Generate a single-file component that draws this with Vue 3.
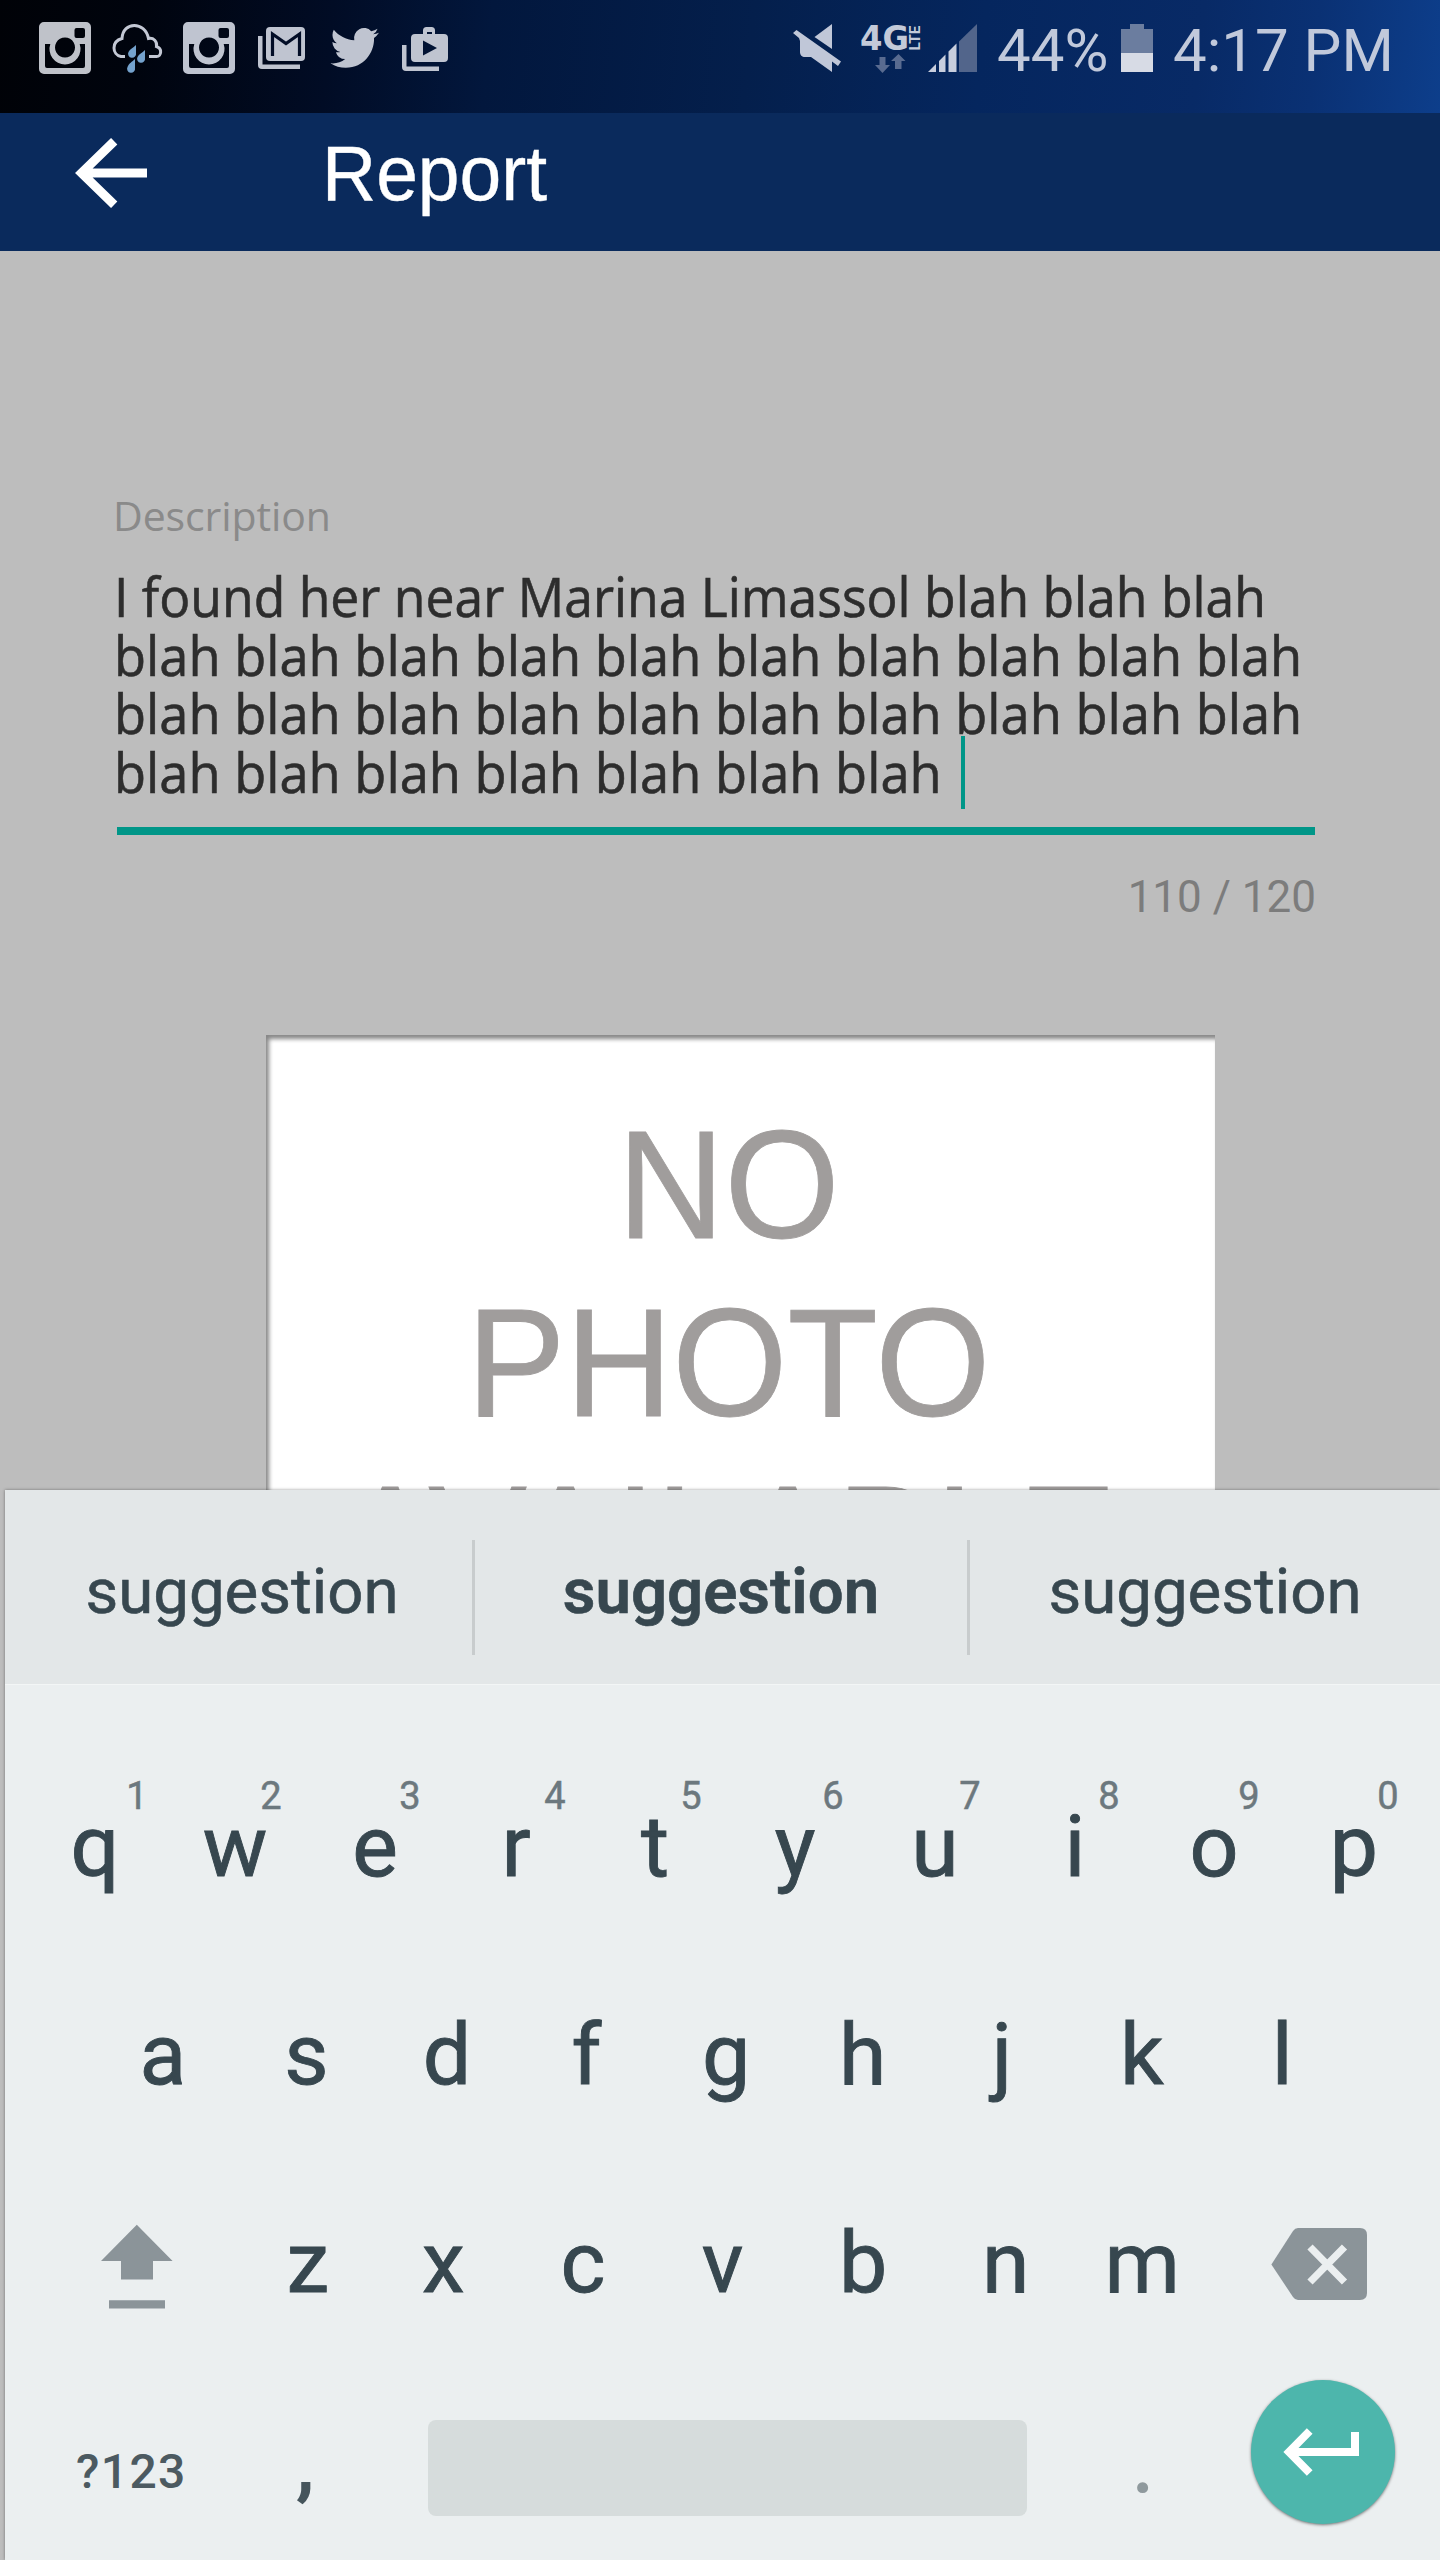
<script setup>
const lines = [
  { text: 'I found her near Marina Limassol blah blah blah', fit: 0.939 },
  { text: 'blah blah blah blah blah blah blah blah blah blah', fit: 0.953 },
  { text: 'blah blah blah blah blah blah blah blah blah blah', fit: 0.953 },
  { text: 'blah blah blah blah blah blah blah', fit: 0.953 },
]
const suggestions = ['suggestion', 'suggestion', 'suggestion']

// dx: optical nudge of a glyph inside its key, in px
const nudged = (letters, offsets) => [...letters].map((key, i) => ({ key, dx: offsets[i] }))
const numX = [5, -1, -2, 2, -1, 1, -2, -3, -2, -3]
const row1 = nudged('qwertyuiop', [0, 0, 0, 1, 0, 0, 0, 0, -1, -1]).map((k, i) => ({
  ...k,
  num: (i + 1) % 10,
  numDx: numX[i],
}))
const row2 = nudged('asdfghjkl', [-2, 2, 3, 3, 3, 0, 0, 0, 1])
const row3 = nudged('zxcvbnm', [0, -4, -4, -4, -3, 0, -3])
const shift = (dx) => ({ transform: `translateX(${dx}px)` })
</script>

<template>
  <div class="screen">
    <div class="status">
      <svg class="ico" width="73" height="101" viewBox="28 0 73 101">
        <path fill="#bfc2c9" fill-rule="evenodd" d="M44 22H86a5 5 0 0 1 5 5V69a5 5 0 0 1-5 5H44a5 5 0 0 1-5-5V27a5 5 0 0 1 5-5ZM76.500 28a2 2 0 0 0-2 2v6a2 2 0 0 0 2 2h6.500a2 2 0 0 0 2-2v-6a2 2 0 0 0-2-2ZM45 44v22a2 2 0 0 0 2 2H83a2 2 0 0 0 2-2V44h-5.300a15.500 15.500 0 1 1-29.400 0ZM65 37.500a10 10 0 1 0 .01 0Z" />
      </svg>
      <svg class="ico" width="71" height="101" viewBox="101 0 71 101">
        <path fill="none" stroke="#c3c8d4" stroke-width="3" d="M125 56.500H121c-9-2-10-15 1-18C123 21 145 21 148.500 38.500c5-1 9 3 8 8 6 2 5 10 0 10H149" />
        <g fill="#74a2cd">
          <path d="M136 45v8a4 4 0 1 1-7.500-1C130 49 133 48 136 45Z" />
          <path d="M145 50v8a4 4 0 1 1-7.500-1C139 54 142 53 145 50Z" />
          <path d="M135 59v9a4 4 0 1 1-7.500-1C129 63 132 62 135 59Z" />
        </g>
      </svg>
      <svg class="ico" width="73" height="101" viewBox="172 0 73 101">
        <path transform="translate(144 0)" fill="#bfc4d0" fill-rule="evenodd" d="M44 22H86a5 5 0 0 1 5 5V69a5 5 0 0 1-5 5H44a5 5 0 0 1-5-5V27a5 5 0 0 1 5-5ZM76.500 28a2 2 0 0 0-2 2v6a2 2 0 0 0 2 2h6.500a2 2 0 0 0 2-2v-6a2 2 0 0 0-2-2ZM45 44v22a2 2 0 0 0 2 2H83a2 2 0 0 0 2-2V44h-5.300a15.500 15.500 0 1 1-29.400 0ZM65 37.500a10 10 0 1 0 .01 0Z" />
      </svg>
      <svg class="ico" width="73" height="101" viewBox="245 0 73 101">
        <path fill="#bfc4d0" d="M258 36h4.500v28.500H300V69H262a4 4 0 0 1-4-4Z" />
        <rect x="266" y="27" width="39" height="34" rx="4" fill="#bfc4d0" />
        <path fill="none" stroke="#020d26" stroke-width="3.200" d="M272.500 56V34L286 43.500 299.500 34V56" />
      </svg>
      <svg class="ico" width="72" height="101" viewBox="318 0 72 101">
        <path transform="translate(330.500 23.400) scale(2.020 2.040)" fill="#bfc4d0" d="M23.953 4.570a10 10 0 01-2.825.775 4.958 4.958 0 002.163-2.723c-.951.555-2.005.959-3.127 1.184a4.920 4.920 0 00-8.384 4.482C7.690 8.095 4.067 6.130 1.640 3.162a4.822 4.822 0 00-.666 2.475c0 1.710.870 3.213 2.188 4.096a4.904 4.904 0 01-2.228-.616v.060a4.923 4.923 0 003.946 4.827 4.996 4.996 0 01-2.212.085 4.936 4.936 0 004.604 3.417 9.867 9.867 0 01-6.102 2.105c-.390 0-.779-.023-1.170-.067a13.995 13.995 0 007.557 2.209c9.053 0 13.998-7.496 13.998-13.985 0-.210 0-.420-.015-.630A9.935 9.935 0 0024 4.590z" />
      </svg>
      <svg class="ico" width="70" height="101" viewBox="390 0 70 101">
        <path fill="#bfc4d0" d="M402 45h4.500v21.500H439V71H406a4 4 0 0 1-4-4Z" />
        <path fill="#bfc4d0" fill-rule="evenodd" d="M415 34h8v-3.500a3.500 3.500 0 0 1 3.500-3.500h5a3.500 3.500 0 0 1 3.500 3.500V34h9a4 4 0 0 1 4 4V58a4 4 0 0 1-4 4H415a4 4 0 0 1-4-4V38a4 4 0 0 1 4-4ZM427 32v2h5v-2ZM423 40.500V55.500L437 48Z" />
      </svg>
      <div class="grow"></div>
      <svg class="ico" width="64" height="101" viewBox="786 0 64 101">
        <g fill="#c0c7d8">
          <path d="M832 24V49L814.500 37Z" />
          <path d="M796.500 30 841 61.500 838 66 832 61.500V72L811 57h-6c-3 0-5-2-5-5V41l-1-3-6-5Z" />
        </g>
      </svg>
      <svg class="ico" width="75" height="101" viewBox="850 0 75 101">
        <text class="net" x="860" y="50" textLength="49" lengthAdjust="spacingAndGlyphs">4G</text>
        <text class="lte" transform="translate(920 50.500) rotate(-90)" textLength="25" lengthAdjust="spacingAndGlyphs">LTE</text>
        <g fill="#596b90">
          <path d="M879.500 57h6v8h4.500L882.500 73 875 65h4.500Z" />
          <path d="M895 69h6.500v-8h4L898.500 54 891 61h4Z" />
        </g>
      </svg>
      <svg class="ico" width="61" height="101" viewBox="925 0 61 101">
        <path fill="#c8cedd" d="M928 72 936 64V72ZM939 61 945.500 54.500V72H939ZM948.500 51.500 956.500 43.500V72h-8Z" />
        <path fill="#52658b" d="M959 41.500 977 24V72H959Z" />
      </svg>
      <span class="stext pct">44%</span>
      <svg class="ico" width="50" height="101" viewBox="1112 0 50 101">
        <path fill="#6b7d9f" d="M1130 24h14v5h9V53h-32V29h9Z" />
        <path fill="#d7dbe5" d="M1121 53h32V72h-32Z" />
      </svg>
      <span class="stext clock">4:17 PM</span>
    </div>

    <header class="bar">
      <svg class="back" width="72" height="70" viewBox="75 138 72 70">
        <path fill="none" stroke="#fff" stroke-width="9" d="M114.200 141.200 81.500 173 114.200 204.800M82 173H147" />
      </svg>
      <h1>Report</h1>
    </header>

    <main>
      <label>Description</label>
      <div class="field">
        <div class="lines">
          <div v-for="(line, i) in lines" :key="i" class="line" :style="{ transform: `scaleX(${line.fit})` }">{{ line.text }}</div>
        </div>
        <i class="caret"></i>
      </div>
      <div class="counter">110 / 120</div>
      <div class="photo">
        <div class="ph">NO<br />PHOTO<br />AVAILABLE</div>
      </div>
    </main>

    <section class="kb">
      <div class="strip">
        <template v-for="(s, i) in suggestions" :key="i">
          <i v-if="i" class="sep"></i>
          <span class="sug" :class="{ main: i === 1, first: i === 0 }">{{ s }}</span>
        </template>
      </div>
      <div class="row r1">
        <span v-for="k in row1" :key="k.key" class="key" :style="shift(k.dx)">{{ k.key }}<sup :style="shift(k.numDx)">{{ k.num }}</sup></span>
      </div>
      <div class="row r2">
        <span v-for="k in row2" :key="k.key" class="key" :style="shift(k.dx)">{{ k.key }}</span>
      </div>
      <div class="row r3">
        <svg width="233" height="208" viewBox="5 2159 233 208">
          <path fill="#8b9499" d="M136.800 2224.800 172.600 2261H153v18.600H121V2261H101ZM109 2300.200h56v8.200h-56Z" />
        </svg>
        <span v-for="k in row3" :key="k.key" class="key" :style="shift(k.dx)">{{ k.key }}</span>
        <svg width="225" height="208" viewBox="1215 2159 225 208">
          <path fill="#8b9499" d="M1271.400 2264.500 1293 2231q2-3 5-3H1360q7 0 7 7V2293q0 7-7 7H1298q-3 0-5-3Z" />
          <path fill="none" stroke="#ebeff0" stroke-width="7.300" d="M1310 2247 1344.500 2282M1344.500 2247 1310 2282" />
        </svg>
      </div>
      <div class="row r4">
        <span class="sym">?123</span>
        <span class="punct">,</span>
        <div class="space"></div>
        <span class="punct dot">.</span>
        <div class="enter">
          <svg width="144" height="144" viewBox="1251 2380 144 144">
            <path fill="none" stroke="#fff" stroke-width="8" d="M1309.700 2431 1289 2452 1309.700 2473M1289 2452H1355V2432" />
          </svg>
        </div>
      </div>
    </section>
  </div>
</template>

<style>
body {
  margin: 0;
}
</style>

<style scoped>
.screen {
  width: 1440px;
  height: 2560px;
  overflow: hidden;
  background: #bdbdbd;
  display: flex;
  flex-direction: column;
  font-family: Roboto, sans-serif;
}
svg {
  display: block;
  flex: none;
}
.status {
  flex: none;
  box-sizing: border-box;
  height: 113px;
  padding: 0 0 12px 28px;
  display: flex;
  align-items: center;
  background: linear-gradient(96deg, #000207 0%, #00040e 10%, #010c25 23%, #02173d 34%, #041f4c 52%, #05265e 68%, #082a66 83%, #0a3174 91%, #0d3e8b 100%);
}
.grow {
  flex: 1;
}
.net {
  font: 700 33px "DejaVu Sans", sans-serif;
  fill: #c3cad9;
}
.lte {
  font: 700 14px Roboto, sans-serif;
  fill: #c3cad9;
}
.stext {
  flex: none;
  font-size: 60px;
  line-height: 101px;
  color: #c1c9db;
  white-space: nowrap;
}
.pct {
  width: 115px;
  padding-left: 11px;
}
.clock {
  width: 267px;
  padding-left: 11px;
}
.bar {
  flex: none;
  box-sizing: border-box;
  height: 138px;
  padding: 0 0 18px 75px;
  display: flex;
  align-items: center;
  gap: 175px;
  background: #0a2a5c;
}
h1 {
  margin: 0;
  font: 400 75px/100px "Liberation Sans", Arial, sans-serif;
  color: #fff;
  -webkit-text-stroke: .4px #fff;
  transform: scaleY(1.045);
}
main {
  flex: none;
  box-sizing: border-box;
  height: 1239px;
  padding: 234px 0 0;
  overflow: hidden;
  display: flex;
  flex-direction: column;
}
label {
  flex: none;
  margin-left: 113px;
  font: 400 41px/60px "Open Sans", sans-serif;
  letter-spacing: -.1px;
  color: #8a8a8a;
}
.field {
  flex: none;
  position: relative;
  box-sizing: border-box;
  width: 1198px;
  height: 268px;
  margin: 22px 0 0 117px;
  border-bottom: 8px solid #009688;
}
.lines {
  margin-left: -3px;
  font: 400 55px/58.500px "Open Sans", sans-serif;
  color: #2d2d2d;
  -webkit-text-stroke: .6px #2d2d2d;
  white-space: nowrap;
}
.line {
  transform-origin: 0 0;
}
.caret {
  position: absolute;
  left: 844px;
  top: 169px;
  width: 4px;
  height: 73px;
  background: #009688;
}
.counter {
  flex: none;
  width: 1316px;
  margin-top: 37px;
  text-align: right;
  font-size: 44px;
  line-height: 50px;
  color: #7c7c7c;
}
.photo {
  flex: none;
  box-sizing: border-box;
  width: 949px;
  height: 700px;
  margin: 113px 0 0 266px;
  padding: 62px 24px 0 0;
  background: #fff;
  box-shadow: inset 3px 4px 4px rgba(0, 0, 0, .48);
}
.ph {
  font: 400 148px/170.500px "Liberation Sans", Arial, sans-serif;
  color: #a09d9c;
  -webkit-text-stroke: .8px #a09d9c;
  text-align: center;
  transform: scaleY(1.040);
  transform-origin: 50% 0;
}
.kb {
  position: relative;
  flex: none;
  height: 1070px;
  margin-left: 5px;
  background: #ebeff0;
  box-shadow: 0 0 3px rgba(0, 0, 0, .4);
  color: #37474f;
}
.strip {
  box-sizing: border-box;
  height: 195px;
  padding-top: 21px;
  display: flex;
  align-items: center;
  background: #e3e7e8;
  border-bottom: 1px solid #f3f6f6;
}
.sug {
  flex: 1;
  text-align: center;
  font-size: 63.500px;
  line-height: 80px;
  margin-bottom: 12px;
  -webkit-text-stroke: .6px #37474f;
}
.sug.first {
  flex: 0 0 460px;
  padding-left: 7px;
}
.sug.main {
  flex: 0 0 492px;
  font-weight: 600;
}
.sep {
  width: 3px;
  height: 115px;
  background: #c8cccd;
}
.row {
  display: flex;
  align-items: center;
  height: 208px;
}
.r1 {
  padding: 0 15px 0 20px;
  margin-top: 56px;
  border-top: 2px solid transparent;
}
.strip + .row {
  box-sizing: border-box;
  height: 210px;
}
.r2 {
  padding: 0 89px 0 90px;
}
.key {
  position: relative;
  flex: 1;
  text-align: center;
  font-size: 86px;
  line-height: 208px;
  -webkit-text-stroke: .9px #37474f;
}
sup {
  position: absolute;
  left: calc(50% + 20px);
  top: 28px;
  width: 34px;
  text-align: center;
  font-size: 38px;
  line-height: 50px;
  color: #6c787e;
  -webkit-text-stroke: .5px #6c787e;
}
.r4 {
  box-sizing: border-box;
  height: 193px;
  padding: 9px 45px 0 71px;
}
.sym {
  width: 195px;
  font-size: 48px;
  font-weight: 500;
  letter-spacing: 1.400px;
  line-height: 60px;
  color: #4c5a61;
  margin-top: 8px;
}
.punct {
  width: 68px;
  text-align: center;
  font-size: 80px;
  line-height: 80px;
  margin-bottom: 6px;
  color: #46555c;
  -webkit-text-stroke: 2px currentColor;
}
.space {
  width: 599px;
  height: 96px;
  margin: 0 82px 0 89px;
  border-radius: 8px;
  background: #d6dcdc;
}
.punct.dot {
  color: #8f999d;
}
.enter {
  width: 144px;
  height: 144px;
  margin: 0 0 32px auto;
  border-radius: 50%;
  background: #4db6ac;
  box-shadow: 0 1px 3px rgba(0, 0, 0, .5);
}
</style>
